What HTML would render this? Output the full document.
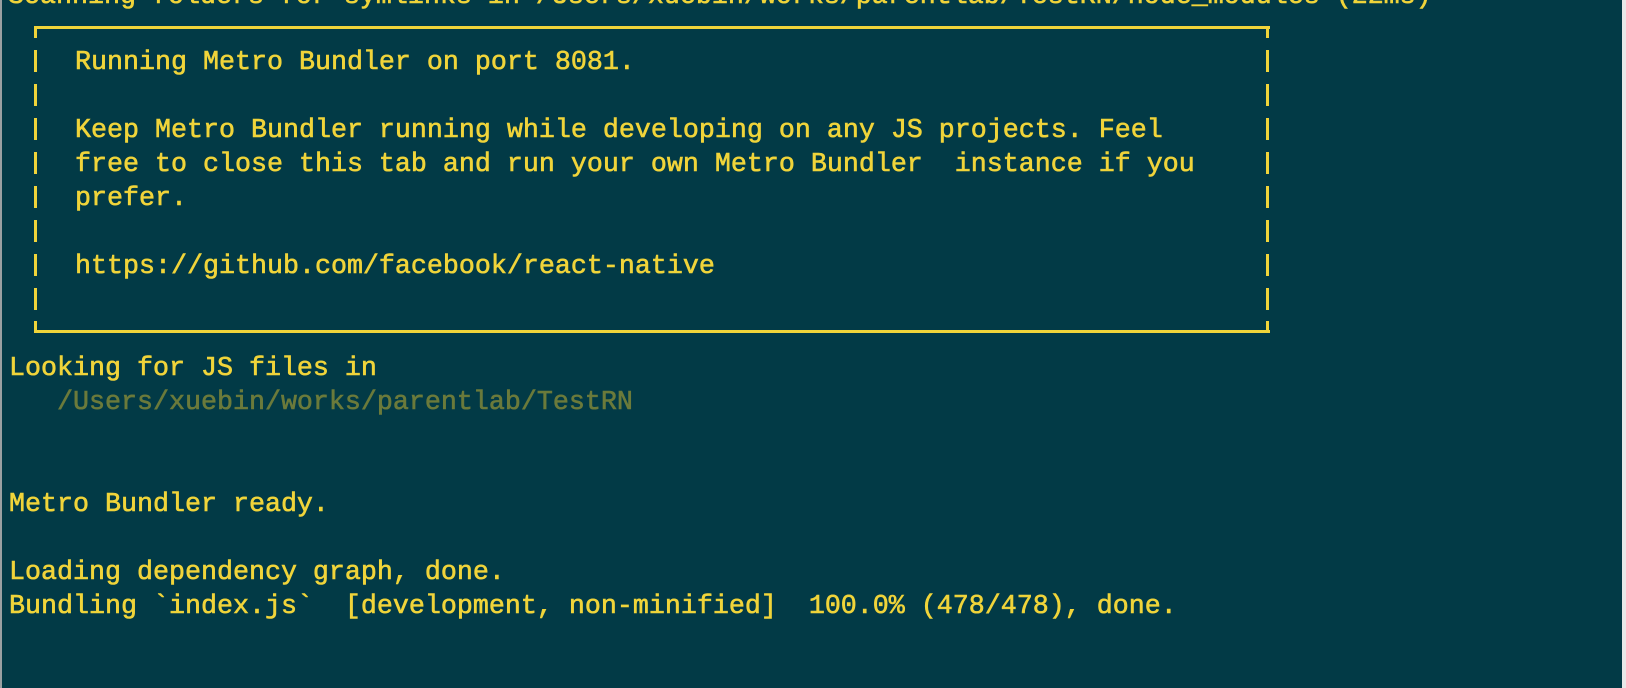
<!DOCTYPE html>
<html><head><meta charset="utf-8"><style>
html,body{margin:0;padding:0;}
body{width:1626px;height:688px;background:#023a46;position:relative;overflow:hidden;font-family:"Liberation Mono",monospace;font-size:26.67px;color:#f0d43a;-webkit-text-stroke:0.6px #f0d43a;}
.l{position:absolute;white-space:pre;line-height:34px;height:34px;}
.g{color:#6b7a3b;-webkit-text-stroke:0.6px #6b7a3b;}
.edge{position:absolute;left:0;top:0;width:2px;height:688px;background:#9aa0a2;}
.redge{position:absolute;left:1622px;top:0;width:4px;height:688px;background:#e8e8e8;}
.h{position:absolute;background:#f0d43a;height:3px;}
.v{position:absolute;background:#f0d43a;width:3px;}
</style></head><body>
<div class="edge"></div>
<div class="redge"></div>
<div class="l" style="left:8px;top:-20px">Scanning folders for symlinks in /Users/xuebin/works/parentlab/TestRN/node_modules (22ms)</div>
<div class="h" style="left:34px;top:26px;width:1236px"></div>
<div class="v" style="left:34px;top:26px;height:12px"></div>
<div class="v" style="left:1266px;top:26px;height:12px"></div>
<div class="h" style="left:34px;top:330px;width:1236px"></div>
<div class="v" style="left:34px;top:321px;height:12px"></div>
<div class="v" style="left:1266px;top:321px;height:12px"></div>
<div class="v" style="left:34px;top:50px;height:22px"></div><div class="v" style="left:1266px;top:50px;height:22px"></div>
<div class="v" style="left:34px;top:84px;height:22px"></div><div class="v" style="left:1266px;top:84px;height:22px"></div>
<div class="v" style="left:34px;top:118px;height:22px"></div><div class="v" style="left:1266px;top:118px;height:22px"></div>
<div class="v" style="left:34px;top:152px;height:22px"></div><div class="v" style="left:1266px;top:152px;height:22px"></div>
<div class="v" style="left:34px;top:186px;height:22px"></div><div class="v" style="left:1266px;top:186px;height:22px"></div>
<div class="v" style="left:34px;top:220px;height:22px"></div><div class="v" style="left:1266px;top:220px;height:22px"></div>
<div class="v" style="left:34px;top:254px;height:22px"></div><div class="v" style="left:1266px;top:254px;height:22px"></div>
<div class="v" style="left:34px;top:288px;height:22px"></div><div class="v" style="left:1266px;top:288px;height:22px"></div>
<div class="l" style="left:75px;top:46px">Running Metro Bundler on port 8081.</div>
<div class="l" style="left:75px;top:114px">Keep Metro Bundler running while developing on any JS projects. Feel</div>
<div class="l" style="left:75px;top:148px">free to close this tab and run your own Metro Bundler  instance if you</div>
<div class="l" style="left:75px;top:182px">prefer.</div>
<div class="l" style="left:75px;top:250px">https://github.com/facebook/react-native</div>
<div class="l" style="left:9px;top:352px">Looking for JS files in</div>
<div class="l g" style="left:9px;top:386px">   /Users/xuebin/works/parentlab/TestRN</div>
<div class="l" style="left:9px;top:488px">Metro Bundler ready.</div>
<div class="l" style="left:9px;top:556px">Loading dependency graph, done.</div>
<div class="l" style="left:9px;top:590px">Bundling `index.js`  [development, non-minified]  100.0% (478/478), done.</div>
</body></html>
